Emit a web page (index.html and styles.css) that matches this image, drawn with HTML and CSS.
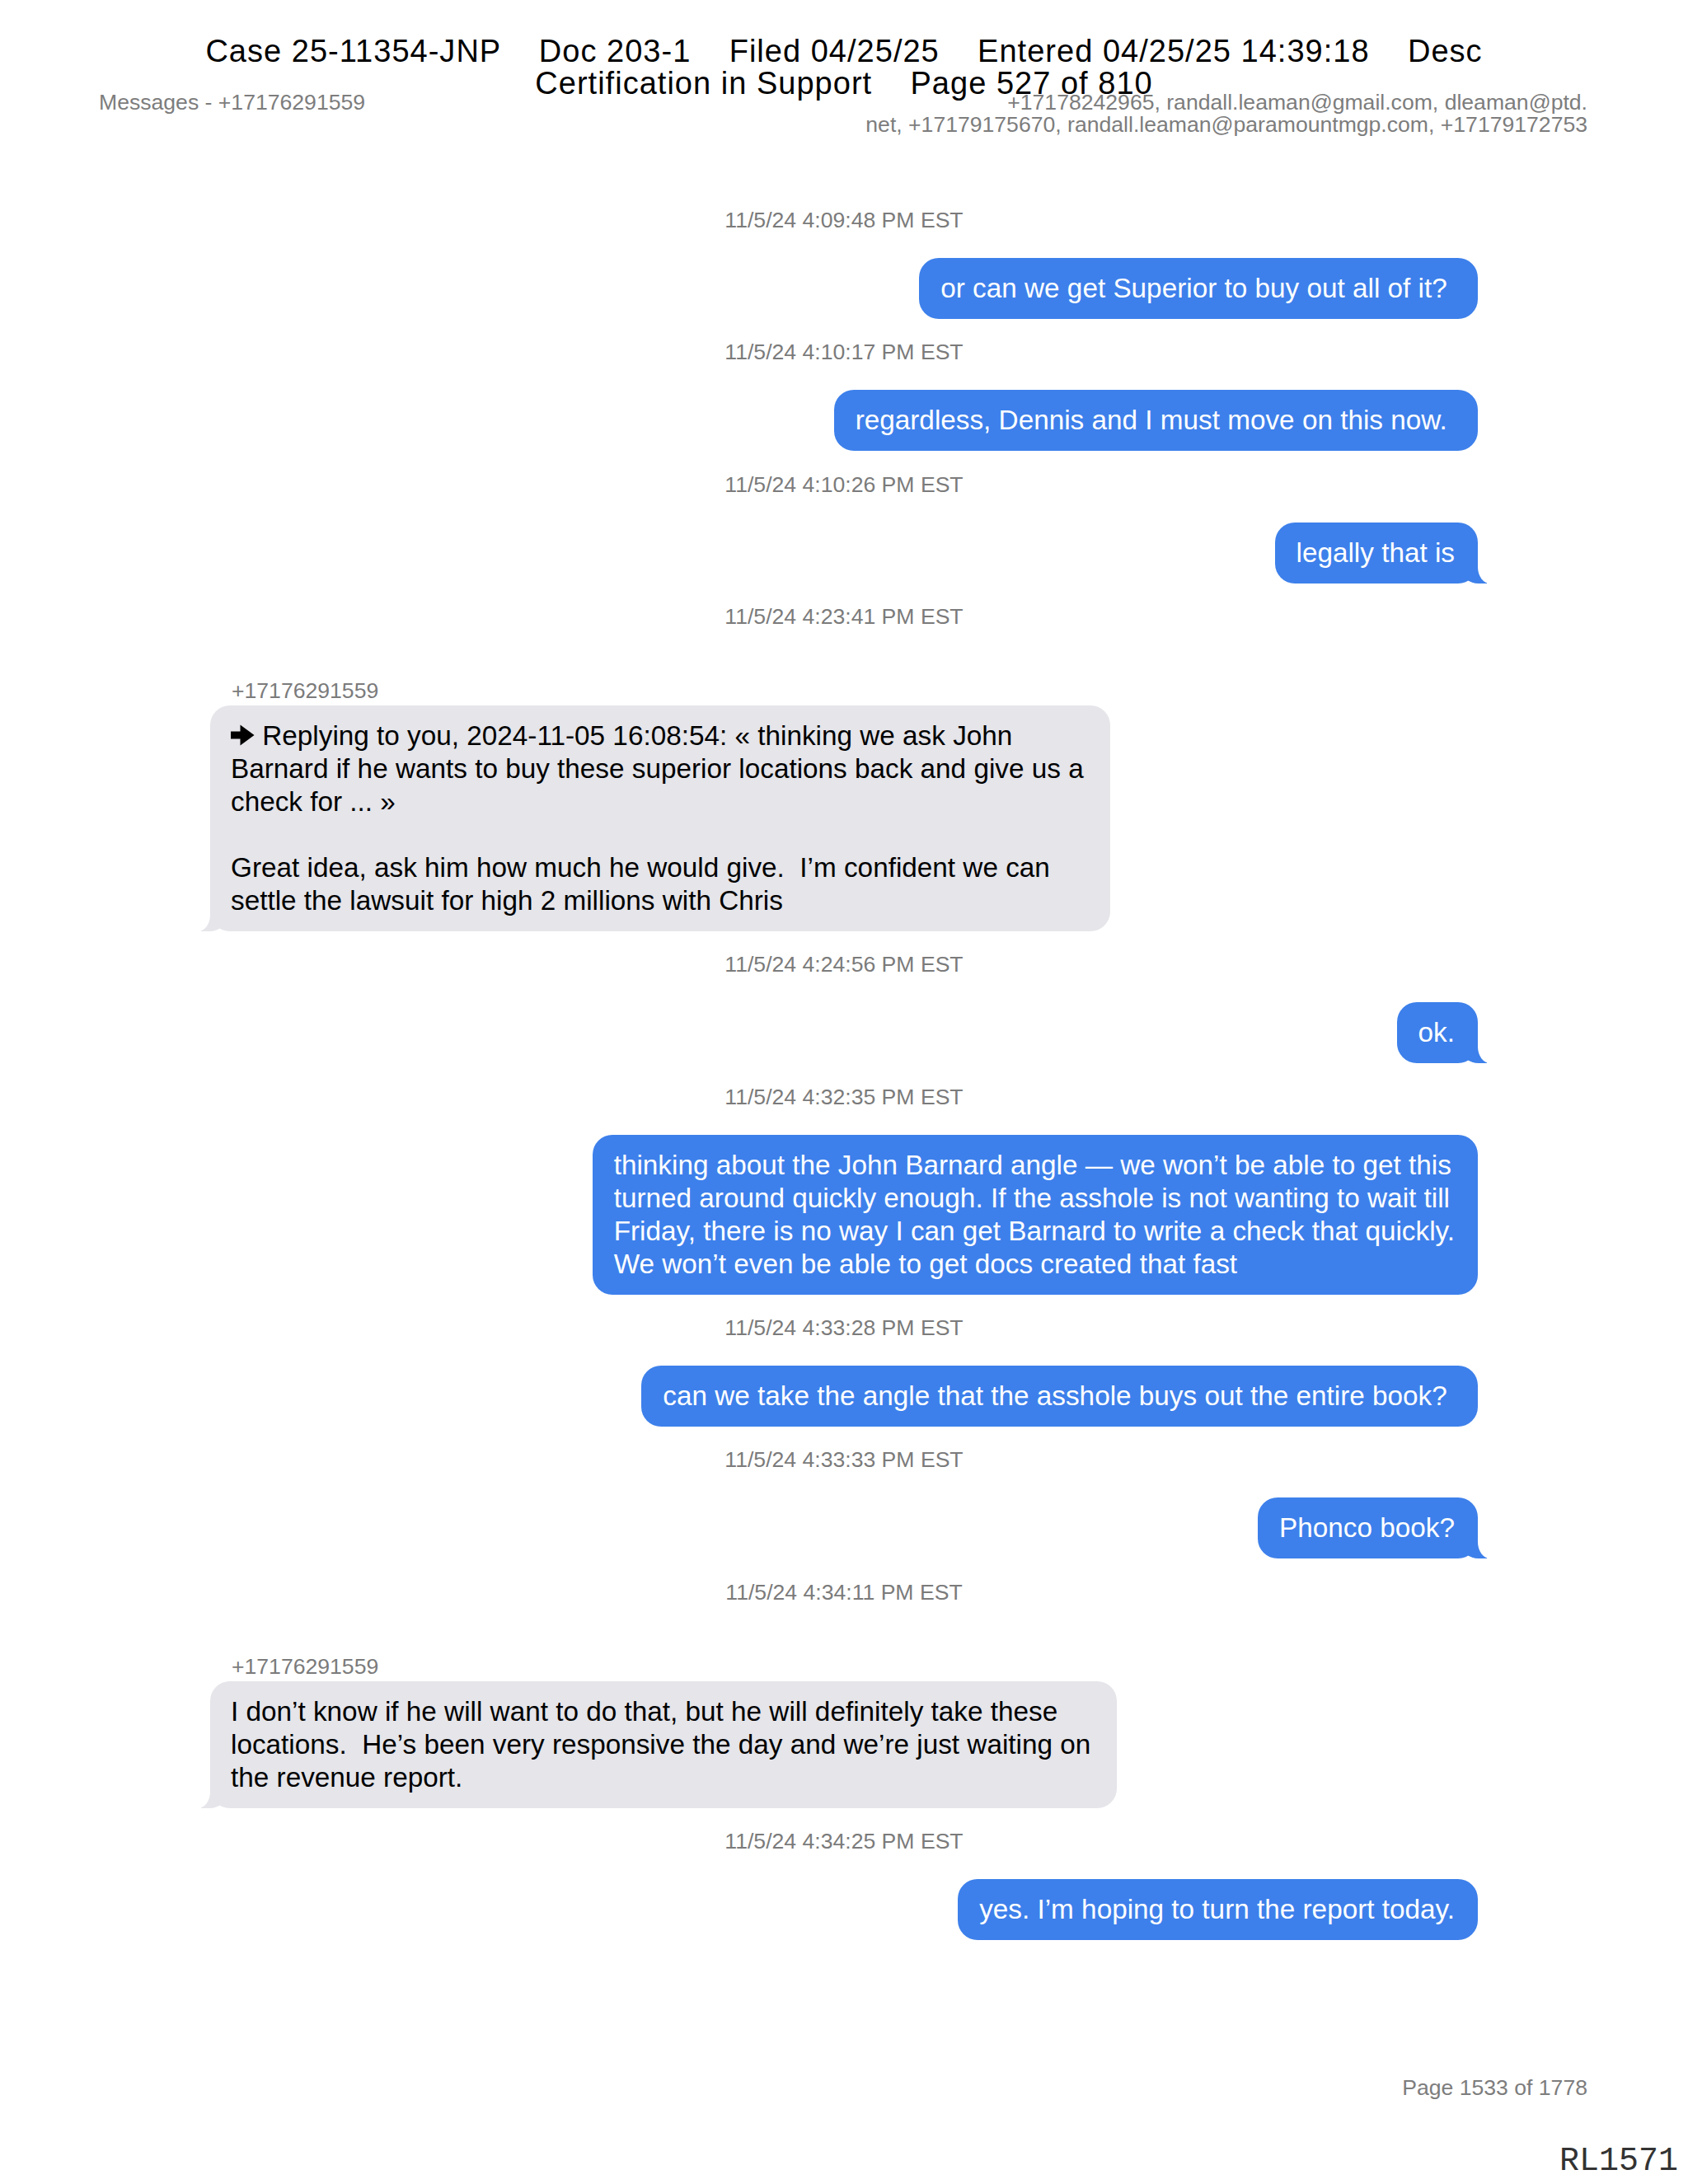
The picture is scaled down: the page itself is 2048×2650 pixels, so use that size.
FILE: index.html
```html
<!DOCTYPE html>
<html lang="en">
<head>
<meta charset="utf-8">
<title>Messages - +17176291559</title>
<link rel="stylesheet" href="styles.css">
</head>
<body>
<div class="page">
<div class="stamp">Case 25-11354-JNP    Doc 203-1    Filed 04/25/25    Entered 04/25/25 14:39:18    Desc
Certification in Support    Page 527 of 810</div>

<header class="head">
  <div class="head-left">Messages - +17176291559</div>
  <div class="head-right">+17178242965, randall.leaman@gmail.com, dleaman@ptd.<br>net, +17179175670, randall.leaman@paramountmgp.com, +17179172753</div>
</header>

<main class="chat">
  <div class="ts">11/5/24 4:09:48 PM EST</div>
  <div class="row me"><div class="bubble blue">or can we get Superior to buy out all of it? </div></div>

  <div class="ts">11/5/24 4:10:17 PM EST</div>
  <div class="row me"><div class="bubble blue">regardless, Dennis and I must move on this now. </div></div>

  <div class="ts">11/5/24 4:10:26 PM EST</div>
  <div class="row me"><div class="bubble blue tail-r">legally that is</div></div>

  <div class="ts">11/5/24 4:23:41 PM EST</div>
  <div class="sender">+17176291559</div>
  <div class="row them"><div class="bubble gray tail-l"><svg class="reply-arrow" width="29" height="26" viewBox="0 0 29 26"><path d="M0 8.5 H11.5 V0.5 L28.5 13 L11.5 25.5 V17.5 H0 Z" fill="#000"/></svg> Replying to you, 2024-11-05 16:08:54: « thinking we ask John<br>Barnard if he wants to buy these superior locations back and give us a<br>check for ... »<br><br>Great idea, ask him how much he would give.  I’m confident we can<br>settle the lawsuit for high 2 millions with Chris</div></div>

  <div class="ts">11/5/24 4:24:56 PM EST</div>
  <div class="row me"><div class="bubble blue tail-r">ok.</div></div>

  <div class="ts">11/5/24 4:32:35 PM EST</div>
  <div class="row me"><div class="bubble blue">thinking about the John Barnard angle — we won’t be able to get this<br>turned around quickly enough. If the asshole is not wanting to wait till<br>Friday, there is no way I can get Barnard to write a check that quickly.<br>We won’t even be able to get docs created that fast</div></div>

  <div class="ts">11/5/24 4:33:28 PM EST</div>
  <div class="row me"><div class="bubble blue">can we take the angle that the asshole buys out the entire book? </div></div>

  <div class="ts">11/5/24 4:33:33 PM EST</div>
  <div class="row me"><div class="bubble blue tail-r">Phonco book?</div></div>

  <div class="ts">11/5/24 4:34:11 PM EST</div>
  <div class="sender">+17176291559</div>
  <div class="row them"><div class="bubble gray tail-l">I don’t know if he will want to do that, but he will definitely take these<br>locations.  He’s been very responsive the day and we’re just waiting on<br>the revenue report.</div></div>

  <div class="ts">11/5/24 4:34:25 PM EST</div>
  <div class="row me"><div class="bubble blue">yes. I’m hoping to turn the report today.</div></div>
</main>

<footer class="foot">
  <div class="pageno">Page 1533 of 1778</div>
  <div class="bates">RL1571</div>
</footer>
</div>
</body>
</html>
```

FILE: styles.css
```css
html, body {
  margin: 0;
  padding: 0;
  background: #ffffff;
}

body {
  font-family: "Liberation Sans", Arial, Helvetica, sans-serif;
  color: #000;
}

.page {
  position: relative;
  width: 2048px;
  min-height: 2650px;
  overflow: hidden;
}

/* court filing stamp laid over the page */
.stamp {
  position: absolute;
  top: 43px;
  left: 0;
  right: 0;
  text-align: center;
  white-space: pre;
  font-size: 38px;
  line-height: 39px;
  letter-spacing: 1.02px;
  color: #000;
  z-index: 2;
}

.head {
  display: flex;
  justify-content: space-between;
  align-items: flex-start;
  padding: 111px 122px 0 120px;
  font-size: 26.6px;
  line-height: 27px;
  color: #7d7d7d;
}

.head-right {
  text-align: right;
}

.chat {
  margin: 0 255px;
  padding-top: 86px;
}

.ts {
  text-align: center;
  font-size: 26.6px;
  line-height: 32px;
  color: #7b7b7b;
  margin-bottom: 30px;
}

.sender {
  font-size: 26.6px;
  line-height: 32px;
  color: #7b7b7b;
  margin-top: 58.2px;
  margin-bottom: 2px;
  padding-left: 26px;
}

.row {
  display: flex;
  margin-bottom: 24.3px;
}

.row.me {
  justify-content: flex-end;
}

.row.them {
  justify-content: flex-start;
}

.bubble {
  position: relative;
  font-size: 33.3px;
  line-height: 40px;
  padding: 17px 28px 17px 26px;
  border-radius: 24px;
  white-space: pre;
}

.bubble.blue {
  background: #3d80eb;
  color: #ffffff;
}

.bubble.gray {
  background: #e5e5ea;
  color: #000000;
  padding: 17px 32px 17px 25px;
}

.reply-arrow {
  vertical-align: -1px;
}

/* right-hand tail for sent messages */
.tail-r::before {
  content: "";
  position: absolute;
  right: -11px;
  bottom: 0;
  width: 32px;
  height: 30px;
  background: #3d80eb;
  border-bottom-left-radius: 22px 20px;
}

.tail-r::after {
  content: "";
  position: absolute;
  right: -30px;
  bottom: 0;
  width: 30px;
  height: 30px;
  background: #ffffff;
  border-bottom-left-radius: 15px 20px;
}

/* left-hand tail for received messages */
.tail-l::before {
  content: "";
  position: absolute;
  left: -11px;
  bottom: 0;
  width: 32px;
  height: 30px;
  background: #e5e5ea;
  border-bottom-right-radius: 22px 20px;
}

.tail-l::after {
  content: "";
  position: absolute;
  left: -30px;
  bottom: 0;
  width: 30px;
  height: 30px;
  background: #ffffff;
  border-bottom-right-radius: 15px 20px;
}

.foot {
  display: flex;
  flex-direction: column;
  align-items: flex-end;
  padding: 139px 12px 0 0;
}

.pageno {
  margin-right: 110px;
  font-size: 26.6px;
  line-height: 32px;
  color: #7d7d7d;
}

.bates {
  margin-top: 51px;
  font-family: "Liberation Mono", "Courier New", monospace;
  font-size: 40px;
  line-height: 46px;
  color: #333;
}
```
